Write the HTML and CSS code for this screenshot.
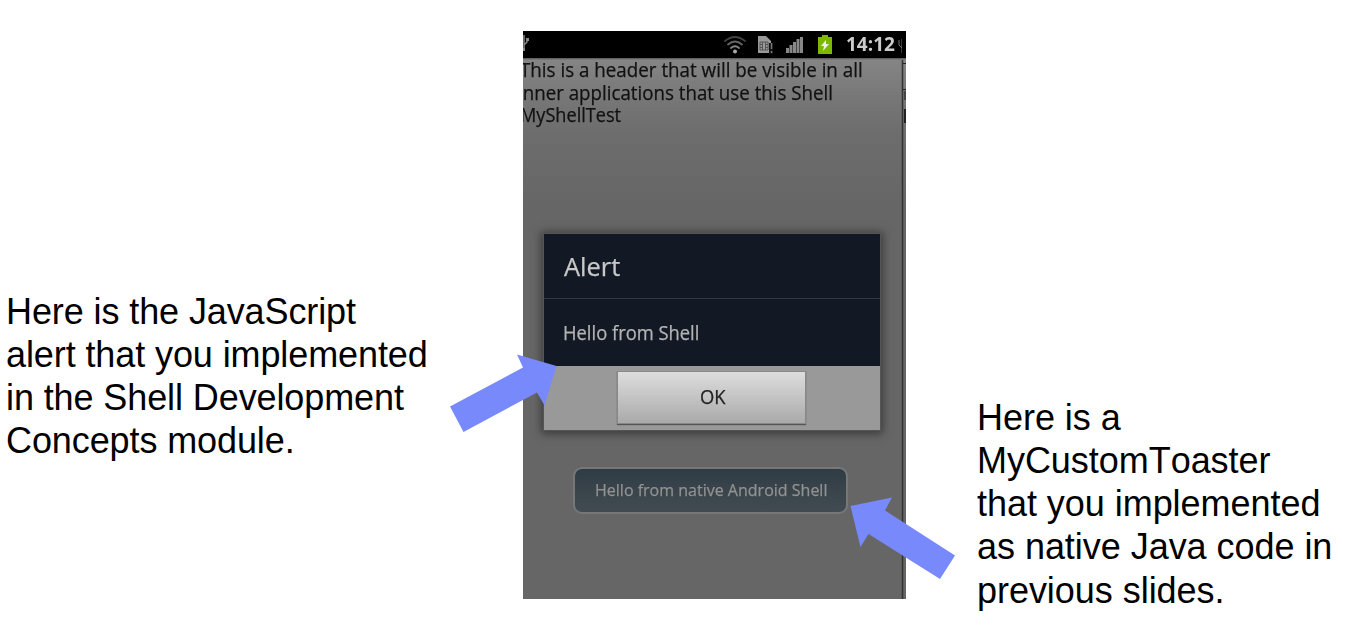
FILE: index.html
```html
<!DOCTYPE html>
<html lang="en">
<head>
<meta charset="utf-8">
<title>Shell alert and toaster</title>
<link rel="stylesheet" href="styles.css">
</head>
<body>
<main class="slide">
  <p class="note note-left">Here is the JavaScript<br>alert that you implemented<br>in the Shell Development<br>Concepts module.</p>
  <section class="phone">
    <header class="status">
      <svg class="usb" width="8" height="20" viewBox="0 0 8 20"><path d="M1 0v14M1 10l3-3V5" fill="none" stroke="#888" stroke-width="1.500"/><path d="M3 3h3v3H3zM0 13h2v3H0z" fill="#888"/></svg>
      <svg class="wifi" width="24" height="20" viewBox="0 0 24 20"><g fill="none" stroke-linecap="round" stroke-width="1.8"><path d="M2 6q10-8 20 0" stroke="#444"/><path d="M5 9.500q7-6 14 0" stroke="#666"/><path d="M8 13q4-3.500 8 0" stroke="#888"/></g><circle cx="12" cy="16.500" r="2" fill="#aaa"/></svg>
      <svg class="sim" width="16" height="20" viewBox="0 0 16 20"><path d="M1 1h8l5 5v12H1z" fill="#999"/><path d="M3 7h8v8H3zM3 9.500h2.500M3 12.500h2.500M8.500 9.500H11M8.500 12.500H11M5.500 7v8M8.500 7v8" fill="none" stroke="#555"/><path d="M12 8h4v11h-4z" fill="#111"/><path d="M14.500 8v6M14.500 16v2" stroke="#777" stroke-width="1.500"/></svg>
      <svg class="signal" width="18" height="20" viewBox="0 0 18 20"><path d="M0 13h3v5H0zM3.500 10h3v8h-3zM7 7h3v11H7zM10.500 4h3v14h-3zM14 2h3v16h-3z" fill="#888"/></svg>
      <svg class="battery" width="16" height="20" viewBox="0 0 16 20"><path d="M5 0h6v2h4v17H1V2h4z" fill="#7db800"/><path d="M9 5l-5 6h3l-1 5 6-7H9z" fill="#eee"/></svg>
      <span class="clock"><span class="fit">14:12</span></span>
      <svg class="next-usb" width="4" height="20" viewBox="0 0 4 20"><path d="M1 5v5l3 3M4 4v14" fill="none" stroke="#777"/></svg>
    </header>
    <div class="page">
      <div class="content">
        <p class="intro"><span class="fit first">This is a header that will be visible in all</span><span class="fit second">inner applications that use this Shell</span><span class="fit third">MyShellTest</span></p>
        <section class="alert">
          <h1><span class="fit">Alert</span></h1>
          <p class="message"><span class="fit">Hello from Shell</span></p>
          <div class="actions"><button><span class="fit">OK</span></button></div>
        </section>
        <div class="toast"><span class="fit">Hello from native Android Shell</span></div>
      </div>
      <svg class="edge" width="5" height="541" viewBox="0 0 5 541"><path d="M1.500 2v539" stroke="#333" stroke-width="1.500"/><path d="M2 5.500h3M2 31.500h3" stroke="#222"/><path d="M3 33h2v9H3z" fill="#444"/><path d="M3 51h2v14H3z" fill="#222"/></svg>
    </div>
  </section>
  <p class="note note-right">Here is a<br>MyCustomToaster<br>that you implemented<br>as native Java code in<br>previous slides.</p>
  <svg class="arrows" viewBox="0 0 1354 643"><path d="M450 406.500L523 367.500 517 354.500 556.500 366 544.500 405.500 537 392.500 463.500 432zM850.500 506L892 497.500 885 510.500 955 555.500 940 579 868.500 534 860.500 547z" fill="#788afb"/></svg>
</main>
</body>
</html>
```
FILE: styles.css
```css
* { box-sizing: border-box; }
body { margin: 0; background: #fff; }
p, h1 { margin: 0; font-weight: 400; }
.slide { position: relative; width: 1354px; height: 643px; display: grid; grid-template-columns: 523px 383px 1fr; align-items: start; overflow: hidden; }
.note { font: 36px/43px "Liberation Sans", Arial, sans-serif; font-kerning: none; letter-spacing: -.1px; color: #000; white-space: nowrap; }
.note-left { padding: 290px 0 0 6px; }
.note-right { padding: 396px 0 0 71px; line-height: 43.15px; letter-spacing: -.04px; }
.phone { margin-top: 31px; height: 568px; overflow: hidden; background: #666; font-family: "Open Sans", "Noto Sans", sans-serif; }
.fit { display: inline-block; white-space: nowrap; transform: scaleX(.942); transform-origin: left center; filter: blur(.35px); -webkit-text-stroke: .25px currentColor; }
.status { height: 27px; background: #000; display: flex; align-items: center; }
.status svg { flex: none; filter: blur(.35px); }
.wifi { margin-left: 192px; }
.sim { margin-left: 10px; }
.signal { margin-left: 13px; }
.battery { margin-left: 13px; }
.clock { width: 52px; margin-left: 13px; padding-bottom: 2px; font-size: 19px; font-weight: 700; color: #ccc; }
.clock .fit { transform: scaleX(1); -webkit-text-stroke: 0; }
.page { height: 541px; display: flex; background: linear-gradient(#555, #858585 2px, #777 40px, #6d6d6d 75px, #666 150px); }
.content { width: 378px; }
.edge { flex: none; }
.intro { height: 175px; padding-top: 1px; font-size: 19.5px; line-height: 22.6px; color: #111; margin-left: -3px; display: flex; flex-direction: column; align-items: flex-start; }
.first { transform: scaleX(.963); }
.second { transform: scaleX(.96); margin-left: -2px; }
.third { transform: scaleX(.93); }
.alert { margin-left: 20px; width: 338px; height: 198px; background: #121925; border: 1px solid #555; box-shadow: 0 1px 8px 2px #3c3c3c; }
.alert h1 { height: 65px; padding-left: 20px; border-bottom: 1px solid #2d3b46; font-size: 26px; line-height: 65px; color: #c8c8c8; }
.alert h1 .fit { transform: scaleX(.98); }
.message { height: 67px; padding-left: 19px; font-size: 19.5px; line-height: 67px; color: #b4b4b4; }
.actions { height: 64px; background: #999; display: flex; justify-content: center; padding: 5px 1px 0 0; }
button { width: 189px; height: 53px; border: 1px solid #888; background: linear-gradient(#ddd, #aaa); box-shadow: 0 1px 1px #555; font: 19.5px/48px "Open Sans", sans-serif; color: #222; padding: 0 0 1px 4px; }
.toast { margin: 36px 0 0 50px; width: 275px; height: 47px; border: 2px solid #777; border-radius: 9px; background: linear-gradient(#2f3c45, #39444b 50%, #424b51); font-size: 17px; line-height: 41px; padding-left: 20px; color: #929292; }
.arrows { position: absolute; inset: 0; width: 1354px; height: 643px; pointer-events: none; }
```
